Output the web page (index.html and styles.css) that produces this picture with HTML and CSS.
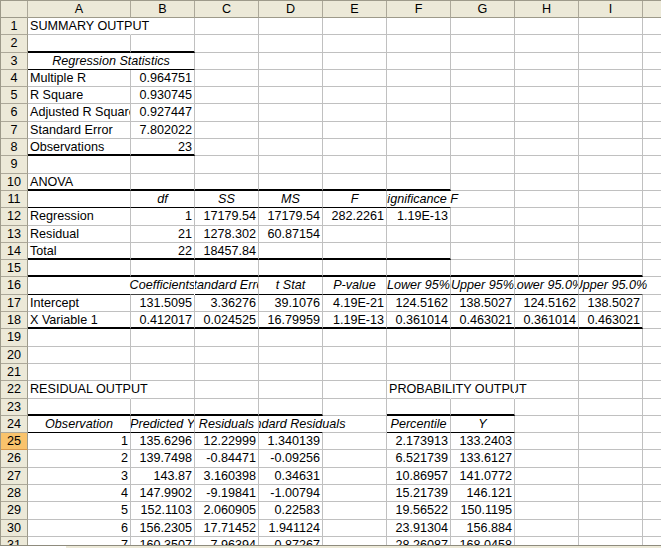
FILE: index.html
```html
<!DOCTYPE html>
<html lang="en">
<head>
<meta charset="utf-8">
<title>Regression output</title>
<link rel="stylesheet" href="styles.css">
</head>
<body>
<div class="app">
  <div class="sheet">
    <div class="row hdr"><div class="corner"></div><div>A</div><div>B</div><div>C</div><div>D</div><div>E</div><div>F</div><div>G</div><div>H</div><div>I</div><div></div></div>

    <div class="row"><div class="rh">1</div><div class="spill nr">SUMMARY OUTPUT</div><div></div><div></div><div></div><div></div><div></div><div></div><div></div><div></div><div></div></div>
    <div class="row"><div class="rh">2</div><div class="tb"></div><div class="tb"></div><div></div><div></div><div></div><div></div><div></div><div></div><div></div><div></div></div>
    <div class="row"><div class="rh">3</div><div class="h kb span2">Regression Statistics</div><div></div><div></div><div></div><div></div><div></div><div></div><div></div><div></div></div>
    <div class="row"><div class="rh">4</div><div>Multiple R</div><div class="n">0.964751</div><div></div><div></div><div></div><div></div><div></div><div></div><div></div><div></div></div>
    <div class="row"><div class="rh">5</div><div>R Square</div><div class="n">0.930745</div><div></div><div></div><div></div><div></div><div></div><div></div><div></div><div></div></div>
    <div class="row"><div class="rh">6</div><div>Adjusted R Square</div><div class="n">0.927447</div><div></div><div></div><div></div><div></div><div></div><div></div><div></div><div></div></div>
    <div class="row"><div class="rh">7</div><div>Standard Error</div><div class="n">7.802022</div><div></div><div></div><div></div><div></div><div></div><div></div><div></div><div></div></div>
    <div class="row"><div class="rh">8</div><div class="tb">Observations</div><div class="n tb">23</div><div></div><div></div><div></div><div></div><div></div><div></div><div></div><div></div></div>
    <div class="row"><div class="rh">9</div><div></div><div></div><div></div><div></div><div></div><div></div><div></div><div></div><div></div><div></div></div>
    <div class="row"><div class="rh">10</div><div class="tb">ANOVA</div><div class="tb"></div><div class="tb"></div><div class="tb"></div><div class="tb"></div><div class="tb"></div><div></div><div></div><div></div><div></div></div>
    <div class="row"><div class="rh">11</div><div class="kb"></div><div class="h kb">df</div><div class="h kb">SS</div><div class="h kb">MS</div><div class="h kb">F</div><div class="h kb spill-r nr">Significance F</div><div></div><div></div><div></div><div></div></div>
    <div class="row"><div class="rh">12</div><div>Regression</div><div class="n">1</div><div class="n">17179.54</div><div class="n">17179.54</div><div class="n">282.2261</div><div class="n">1.19E-13</div><div></div><div></div><div></div><div></div></div>
    <div class="row"><div class="rh">13</div><div>Residual</div><div class="n">21</div><div class="n">1278.302</div><div class="n">60.87154</div><div></div><div></div><div></div><div></div><div></div><div></div></div>
    <div class="row"><div class="rh">14</div><div class="tb">Total</div><div class="n tb">22</div><div class="n tb">18457.84</div><div class="tb"></div><div class="tb"></div><div class="tb"></div><div></div><div></div><div></div><div></div></div>
    <div class="row"><div class="rh">15</div><div class="tb"></div><div class="tb"></div><div class="tb"></div><div class="tb"></div><div class="tb"></div><div class="tb"></div><div class="tb"></div><div class="tb"></div><div class="tb"></div><div></div></div>
    <div class="row"><div class="rh">16</div><div class="kb nr"></div><div class="h kb spill-l">Coefficients</div><div class="h kb">Standard Error</div><div class="h kb">t Stat</div><div class="h kb">P-value</div><div class="h kb">Lower 95%</div><div class="h kb">Upper 95%</div><div class="h kb">Lower 95.0%</div><div class="h kb spill-r nr">Upper 95.0%</div><div></div></div>
    <div class="row"><div class="rh">17</div><div>Intercept</div><div class="n">131.5095</div><div class="n">3.36276</div><div class="n">39.1076</div><div class="n">4.19E-21</div><div class="n">124.5162</div><div class="n">138.5027</div><div class="n">124.5162</div><div class="n">138.5027</div><div></div></div>
    <div class="row"><div class="rh">18</div><div class="tb">X Variable 1</div><div class="n tb">0.412017</div><div class="n tb">0.024525</div><div class="n tb">16.79959</div><div class="n tb">1.19E-13</div><div class="n tb">0.361014</div><div class="n tb">0.463021</div><div class="n tb">0.361014</div><div class="n tb">0.463021</div><div></div></div>
    <div class="row"><div class="rh">19</div><div></div><div></div><div></div><div></div><div></div><div></div><div></div><div></div><div></div><div></div></div>
    <div class="row"><div class="rh">20</div><div></div><div></div><div></div><div></div><div></div><div></div><div></div><div></div><div></div><div></div></div>
    <div class="row"><div class="rh">21</div><div></div><div></div><div></div><div></div><div></div><div></div><div></div><div></div><div></div><div></div></div>
    <div class="row"><div class="rh">22</div><div class="spill nr">RESIDUAL OUTPUT</div><div></div><div></div><div></div><div></div><div class="spill nr">PROBABILITY OUTPUT</div><div class="nr"></div><div></div><div></div><div></div></div>
    <div class="row"><div class="rh">23</div><div class="tb"></div><div class="tb"></div><div class="tb"></div><div class="tb"></div><div></div><div class="tb"></div><div class="tb"></div><div></div><div></div><div></div></div>
    <div class="row"><div class="rh">24</div><div class="h kb">Observation</div><div class="h kb">Predicted Y</div><div class="h kb">Residuals</div><div class="h kb spill-r nr">Standard Residuals</div><div></div><div class="h kb">Percentile</div><div class="h kb">Y</div><div></div><div></div><div></div></div>
    <div class="row"><div class="rh act">25</div><div class="n">1</div><div class="n">135.6296</div><div class="n">12.22999</div><div class="n">1.340139</div><div></div><div class="n">2.173913</div><div class="n">133.2403</div><div></div><div></div><div></div></div>
    <div class="row"><div class="rh">26</div><div class="n">2</div><div class="n">139.7498</div><div class="n">-0.84471</div><div class="n">-0.09256</div><div></div><div class="n">6.521739</div><div class="n">133.6127</div><div></div><div></div><div></div></div>
    <div class="row"><div class="rh">27</div><div class="n">3</div><div class="n">143.87</div><div class="n">3.160398</div><div class="n">0.34631</div><div></div><div class="n">10.86957</div><div class="n">141.0772</div><div></div><div></div><div></div></div>
    <div class="row"><div class="rh">28</div><div class="n">4</div><div class="n">147.9902</div><div class="n">-9.19841</div><div class="n">-1.00794</div><div></div><div class="n">15.21739</div><div class="n">146.121</div><div></div><div></div><div></div></div>
    <div class="row"><div class="rh">29</div><div class="n">5</div><div class="n">152.1103</div><div class="n">2.060905</div><div class="n">0.22583</div><div></div><div class="n">19.56522</div><div class="n">150.1195</div><div></div><div></div><div></div></div>
    <div class="row"><div class="rh">30</div><div class="n">6</div><div class="n">156.2305</div><div class="n">17.71452</div><div class="n">1.941124</div><div></div><div class="n">23.91304</div><div class="n">156.884</div><div></div><div></div><div></div></div>
    <div class="row"><div class="rh">31</div><div class="n">7</div><div class="n">160.3507</div><div class="n">-7.96394</div><div class="n">-0.87267</div><div></div><div class="n">28.26087</div><div class="n">168.0458</div><div></div><div></div><div></div></div>
  </div>
  <div class="tabs"><div class="tab"></div></div>
</div>
</body>
</html>
```

FILE: styles.css
```css
* {
  box-sizing: border-box;
  margin: 0;
  padding: 0;
}

html, body {
  width: 661px;
  height: 548px;
  overflow: hidden;
  background: #fff;
}

body {
  font-family: "Liberation Sans", Arial, sans-serif;
  font-size: 12.6px;
  color: #000;
}

.app {
  display: flex;
  flex-direction: column;
  height: 548px;
}

.sheet {
  flex: none;
  height: 545px;
  overflow: hidden;
  border-top: 1px solid #9d9a8a;
  border-left: 1px solid #9d9a8a;
}

.row {
  display: grid;
  grid-template-columns: 27px 103px repeat(10, 64px);
  height: 17.3px;
}

.row > div {
  min-width: 0;
  border-right: 1px solid #c0c0c0;
  border-bottom: 1px solid #c0c0c0;
  padding: 1px 2px 0;
  line-height: 15px;
  white-space: nowrap;
  overflow: hidden;
}

.row.hdr {
  height: 17px;
}

.hdr > div,
.row > .rh {
  background: #ece9d8;
  border-right-color: #aca899;
  border-bottom-color: #aca899;
  text-align: center;
  padding-left: 0;
  padding-right: 0;
}

.row > .rh {
  border-right-color: #9d9a8a;
}

.hdr > div {
  border-bottom-color: #9d9a8a;
}

.row > .act {
  background: #f9c36c;
  border-bottom-color: #d8974a;
}

.row > .n {
  text-align: right;
}

.row > .h {
  display: flex;
  justify-content: center;
  font-style: italic;
}

.row > .span2 {
  grid-column: span 2;
}

.row > .spill {
  overflow: visible;
}

.row > .spill-r {
  overflow: visible;
  clip-path: inset(0 -200px 0 0);
}

.row > .spill-l {
  overflow: visible;
  clip-path: inset(0 1px 0 -200px);
}

.row > .nr {
  border-right-color: #fff;
}

.row > .kb {
  border-bottom-color: #000;
}

.row > .tb {
  border-bottom: 2px solid #000;
}

.tabs {
  flex: 1;
  background: #ece9d8;
  border-top: 1px solid #8e8b7d;
  display: flex;
}

.tab {
  width: 66px;
  background: #fff;
}
```
